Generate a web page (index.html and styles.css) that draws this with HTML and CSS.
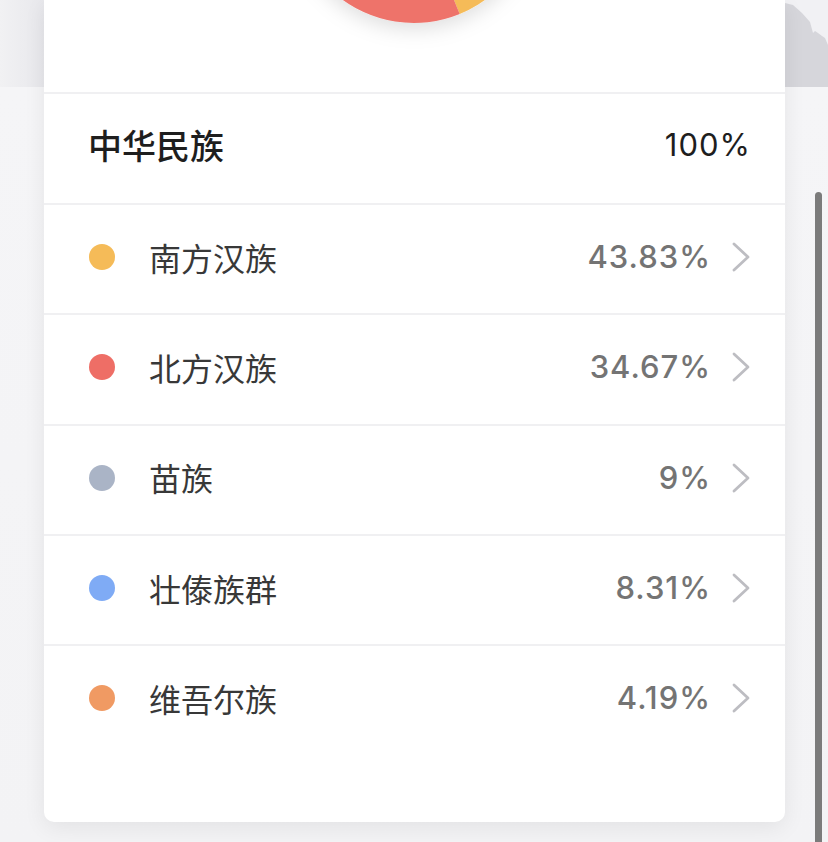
FILE: index.html
```html
<!DOCTYPE html>
<html lang="zh">
<head>
<meta charset="utf-8">
<title>民族构成</title>
<link rel="stylesheet" href="styles.css">
</head>
<body>
<div class="screen">
  <div class="side side-left"></div>
  <div class="card">
    <div class="pie-area">
      <svg class="pie" viewBox="0 0 741 92" width="741" height="92">
        <defs>
          <filter id="pieShadow" x="-30%" y="-30%" width="160%" height="160%">
            <feDropShadow dx="0" dy="6" stdDeviation="10" flood-color="#000" flood-opacity="0.13"/>
          </filter>
        </defs>
        <g filter="url(#pieShadow)">
          <path d="M370,-98 L370,-219 A121,121 0 0 1 415.7,14 Z" fill="#f5bb58"/>
          <path d="M370,-98 L415.7,14 A121,121 0 0 1 251.9,-124.4 Z" fill="#ee736b"/>
          <path d="M370,-98 L251.9,-124.4 A121,121 0 0 1 284.4,-183.6 Z" fill="#aab4c6"/>
          <path d="M370,-98 L284.4,-183.6 A121,121 0 0 1 338.5,-214.8 Z" fill="#7fabf5"/>
          <path d="M370,-98 L338.5,-214.8 A121,121 0 0 1 370,-219 Z" fill="#f09a63"/>
        </g>
      </svg>
    </div>
    <div class="row row-head">
      <span class="name name-head">中华民族</span>
      <span class="pct pct-head">100%</span>
    </div>
    <div class="row">
      <span class="dot dot-yellow"></span>
      <span class="name">南方汉族</span>
      <span class="pct">43.83%</span>
      <svg class="chev" viewBox="0 0 18 30" width="18" height="30"><path d="M2,2 L16,15 L2,28" /></svg>
    </div>
    <div class="row">
      <span class="dot dot-red"></span>
      <span class="name">北方汉族</span>
      <span class="pct">34.67%</span>
      <svg class="chev" viewBox="0 0 18 30" width="18" height="30"><path d="M2,2 L16,15 L2,28" /></svg>
    </div>
    <div class="row">
      <span class="dot dot-gray"></span>
      <span class="name">苗族</span>
      <span class="pct">9%</span>
      <svg class="chev" viewBox="0 0 18 30" width="18" height="30"><path d="M2,2 L16,15 L2,28" /></svg>
    </div>
    <div class="row">
      <span class="dot dot-blue"></span>
      <span class="name">壮傣族群</span>
      <span class="pct">8.31%</span>
      <svg class="chev" viewBox="0 0 18 30" width="18" height="30"><path d="M2,2 L16,15 L2,28" /></svg>
    </div>
    <div class="row">
      <span class="dot dot-orange"></span>
      <span class="name">维吾尔族</span>
      <span class="pct">4.19%</span>
      <svg class="chev" viewBox="0 0 18 30" width="18" height="30"><path d="M2,2 L16,15 L2,28" /></svg>
    </div>
  </div>
  <div class="side side-right">
    <svg class="area" viewBox="0 0 43 87" width="43" height="87">
      <path d="M0,3 L8,5 L17,13 L25,22 L28,33 L30,31 L33,33 L37,36 L40,38 L43,45 L43,87 L0,87 Z" fill="#d6d6db"/>
    </svg>
  </div>
</div>
<div class="scrollbar"></div>
</body>
</html>
```
FILE: styles.css
```css
* { box-sizing: border-box; }
html, body {
  margin: 0;
  padding: 0;
}
body {
  width: 828px;
  height: 842px;
  overflow: hidden;
  background: linear-gradient(to bottom, #ececef 0, #ececef 87px, #f5f5f7 87px, #f3f3f5 100%);
  font-family: "Noto Sans CJK SC", "Noto Sans", sans-serif;
  position: relative;
}
.screen {
  display: grid;
  grid-template-columns: 44px 741px 43px;
  align-items: start;
}
.side { height: 87px; }
.side-left {
  background: linear-gradient(to right, #f1f1f3, #e8e8ec);
}
.side-right {
  background: #f1f1f4;
}
.area { display: block; }
.card {
  background: #fff;
  border-radius: 0 0 10px 10px;
  box-shadow: 0 6px 22px rgba(0, 0, 0, 0.07);
  padding-bottom: 68px;
  position: relative;
  z-index: 1;
}
.pie-area {
  height: 92px;
}
.pie { display: block; }
.row {
  height: 110.3px;
  border-top: 2px solid #f0f0f2;
  display: flex;
  align-items: center;
  padding: 0 35px 0 45px;
}
.row-head {
  height: 111px;
  padding: 0 34px 0 44px;
}
.name {
  font-size: 32px;
  line-height: 40px;
  color: #383838;
  flex: 1;
  margin-top: -5px;
}
.name-head {
  font-size: 34px;
  font-weight: 500;
  color: #1e1e1e;
  margin-top: -7px;
}
.pct {
  font-family: Inter, "Noto Sans", sans-serif;
  font-size: 31px;
  line-height: 40px;
  font-weight: 500;
  color: #747474;
  margin-top: -4px;
  letter-spacing: 1px;
}
.pct-head {
  color: #1e1e1e;
  font-weight: 400;
  margin-top: -7px;
}
.dot {
  width: 26px;
  height: 26px;
  border-radius: 50%;
  margin-right: 34px;
  flex: none;
  margin-top: -4px;
}
.dot-yellow { background: #f5bb58; }
.dot-red { background: #ee6e66; }
.dot-gray { background: #aab4c6; }
.dot-blue { background: #7fabf5; }
.dot-orange { background: #f09a63; }
.chev {
  margin-left: 21px;
  flex: none;
  margin-top: -4px;
}
.chev path {
  fill: none;
  stroke: #bdbdc2;
  stroke-width: 2.8;
  stroke-linecap: round;
  stroke-linejoin: round;
}
.scrollbar {
  position: absolute;
  left: 815px;
  top: 192px;
  width: 7px;
  height: 660px;
  background: #7b7b7b;
  border-radius: 3.5px;
  z-index: 2;
}
```
